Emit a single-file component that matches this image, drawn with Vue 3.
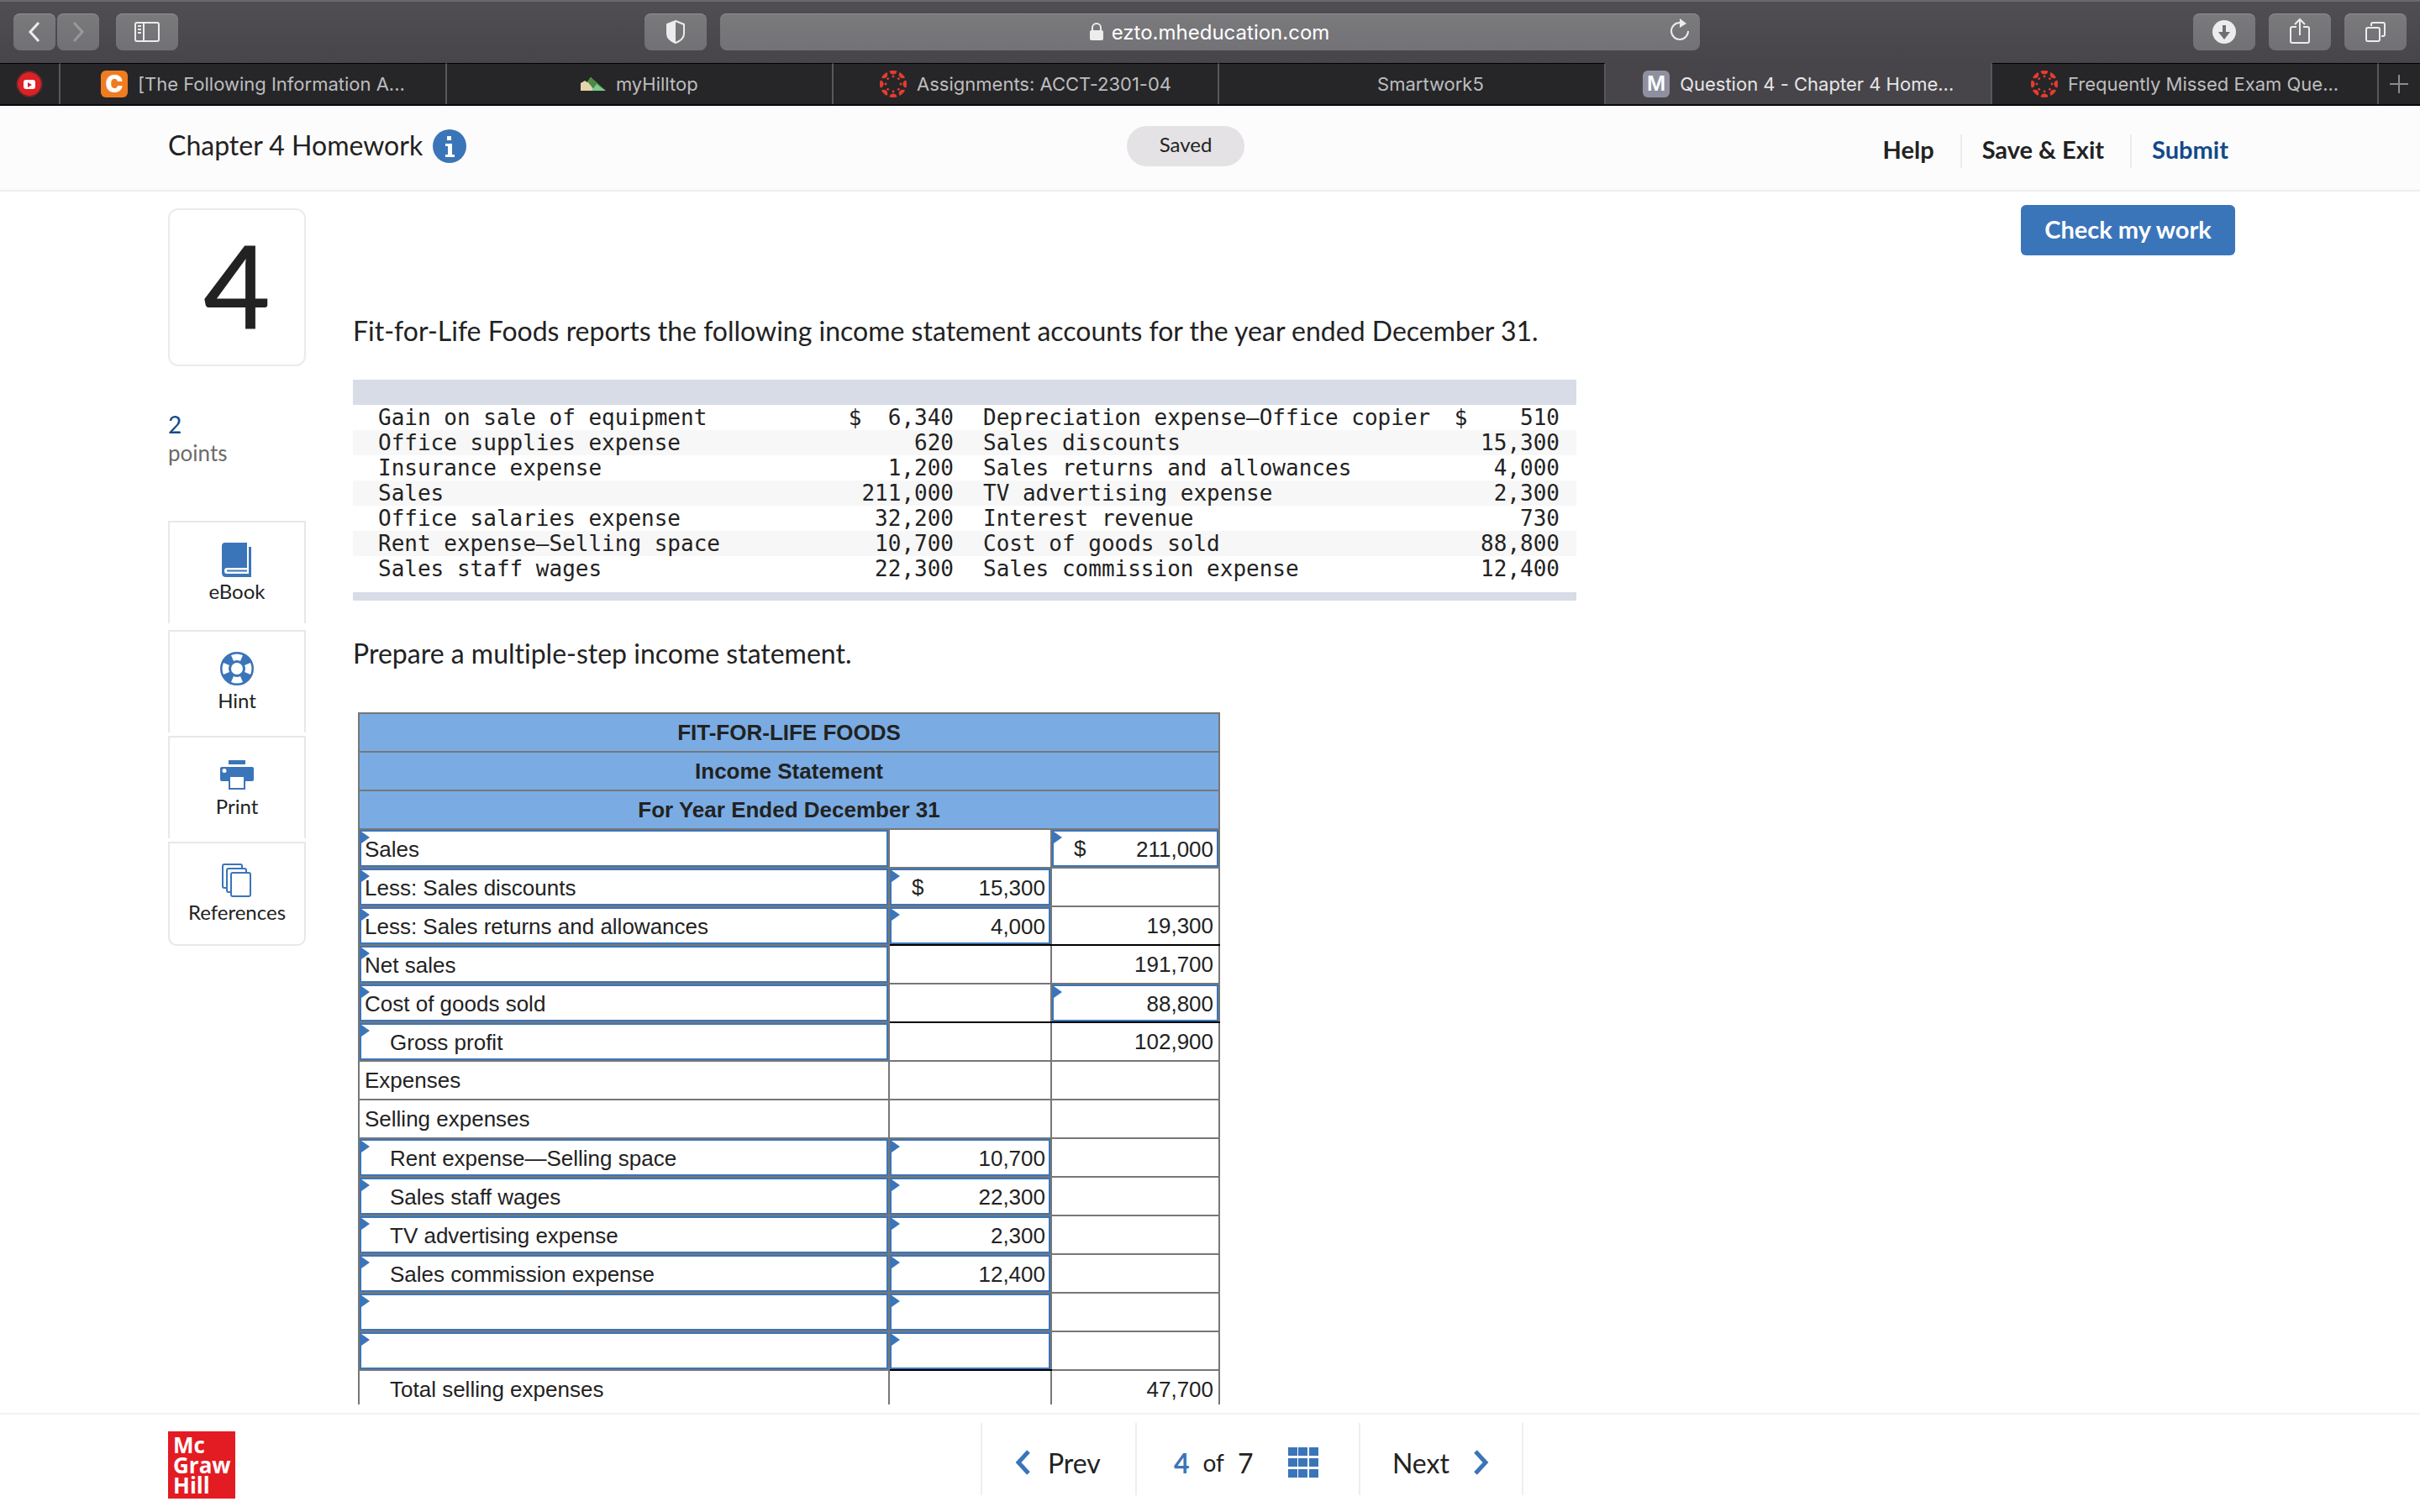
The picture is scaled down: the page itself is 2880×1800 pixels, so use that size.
<script setup>
const tabs = [
  { title: '[The Following Information A...', icon: 'chegg' },
  { title: 'myHilltop', icon: 'hill' },
  { title: 'Assignments: ACCT-2301-04', icon: 'canvas' },
  { title: 'Smartwork5', icon: 'blank' },
  { title: 'Question 4 - Chapter 4 Home...', icon: 'letter', active: true },
  { title: 'Frequently Missed Exam Que...', icon: 'canvas' },
]

const spokes = Array.from({ length: 8 }, (_, i) => {
  const a = (i * Math.PI) / 4
  return {
    x: 16 + 16 * Math.cos(a),
    y: 16 + 16 * Math.sin(a),
    dx: 16 + 9 * Math.cos(a),
    dy: 16 + 9 * Math.sin(a),
  }
})

const accounts = [
  ['Gain on sale of equipment', '$  6,340', 'Depreciation expense—Office copier', '$    510'],
  ['Office supplies expense', '620', 'Sales discounts', '15,300'],
  ['Insurance expense', '1,200', 'Sales returns and allowances', '4,000'],
  ['Sales', '211,000', 'TV advertising expense', '2,300'],
  ['Office salaries expense', '32,200', 'Interest revenue', '730'],
  ['Rent expense—Selling space', '10,700', 'Cost of goods sold', '88,800'],
  ['Sales staff wages', '22,300', 'Sales commission expense', '12,400'],
]

const headings = ['FIT-FOR-LIFE FOODS', 'Income Statement', 'For Year Ended December 31']

// entry: the cell is filled in by the student; rule: a black subtotal line below it
const entry = (text = '', extra = {}) => ({ text, entry: true, ...extra })
const plain = (text = '', extra = {}) => ({ text, ...extra })
const rule = { rule: true }
const indent = { indent: true }
const rows = [
  [entry('Sales'), plain(), entry('211,000', { dollar: true })],
  [entry('Less: Sales discounts'), entry('15,300', { dollar: true }), plain()],
  [entry('Less: Sales returns and allowances'), entry('4,000', rule), plain('19,300', rule)],
  [entry('Net sales'), plain(), plain('191,700')],
  [entry('Cost of goods sold'), plain('', rule), entry('88,800', rule)],
  [entry('Gross profit', indent), plain(), plain('102,900')],
  [plain('Expenses'), plain(), plain()],
  [plain('Selling expenses'), plain(), plain()],
  [entry('Rent expense—Selling space', indent), entry('10,700'), plain()],
  [entry('Sales staff wages', indent), entry('22,300'), plain()],
  [entry('TV advertising expense', indent), entry('2,300'), plain()],
  [entry('Sales commission expense', indent), entry('12,400'), plain()],
  [entry('', indent), entry(), plain()],
  [entry('', indent), entry('', rule), plain()],
  [plain('Total selling expenses', indent), plain(), plain('47,700')],
]
const columns = ['Account', 'Amount', 'Total']
</script>

<template>
  <div class="page">
    <div class="toolbar">
      <div class="group left">
        <div class="pair">
          <button class="tool narrow" aria-label="Back">
            <svg width="50" height="44" viewBox="0 0 50 44"><path d="M30 11 20 22 30 33" class="line bold" /></svg>
          </button>
          <button class="tool narrow dim" aria-label="Forward">
            <svg width="50" height="44" viewBox="0 0 50 44"><path d="M20 11 30 22 20 33" class="line bold" /></svg>
          </button>
        </div>
        <button class="tool" aria-label="Show sidebar">
          <svg width="74" height="44" viewBox="0 0 74 44">
            <rect x="23" y="11" width="28" height="22" rx="2" class="line" />
            <path d="M33 11V33M26 15h4M26 19h4M26 23h4" class="line" />
          </svg>
        </button>
      </div>
      <div class="group middle">
        <button class="tool" aria-label="Privacy report">
          <svg width="74" height="44" viewBox="0 0 74 44">
            <path d="M37 9 47 13V24Q47 31 37 35Q27 31 27 24V13Z" class="line" />
            <path d="M37 9 27 13V24Q27 31 37 35Z" class="solid" />
          </svg>
        </button>
        <div class="address">
          <span class="site">
            <svg width="16" height="22" viewBox="0 0 16 22">
              <rect x="0" y="9" width="16" height="12" rx="2" class="solid" />
              <path d="M3 10V6a5 5 0 0 1 10 0V10" class="line" />
            </svg>
            ezto.mheducation.com
          </span>
          <button class="reload" aria-label="Reload">
            <svg width="24" height="28" viewBox="0 0 24 28">
              <path d="M22 15A10 10 0 1 1 12 5" class="line" />
              <path d="M12 0 20 6 12 11Z" class="solid" />
            </svg>
          </button>
        </div>
      </div>
      <div class="group right">
        <button class="tool" aria-label="Downloads">
          <svg width="74" height="44" viewBox="0 0 74 44">
            <circle cx="37" cy="22" r="14" class="solid" />
            <path d="M37 14V25" stroke="#6f6e72" stroke-width="4" />
            <path d="M30 22H44L37 31Z" fill="#6f6e72" />
          </svg>
        </button>
        <button class="tool" aria-label="Share">
          <svg width="74" height="44" viewBox="0 0 74 44">
            <path d="M33 16H28a2 2 0 0 0-2 2V33a2 2 0 0 0 2 2H46a2 2 0 0 0 2-2V18a2 2 0 0 0-2-2H41M37 26V8M31 13 37 7 43 13" class="line" />
          </svg>
        </button>
        <button class="tool" aria-label="Tab overview">
          <svg width="74" height="44" viewBox="0 0 74 44">
            <rect x="26" y="17" width="16" height="16" rx="2" class="line" />
            <path d="M32 15V13a2 2 0 0 1 2-2H46a2 2 0 0 1 2 2V25a2 2 0 0 1-2 2H44" class="line" />
          </svg>
        </button>
      </div>
    </div>

    <div class="tabs">
      <button class="tab pinned" aria-label="YouTube">
        <svg width="32" height="32" viewBox="0 0 32 32">
          <circle cx="16" cy="16" r="15" fill="#1b1b1d" stroke="#8c3034" stroke-width="1" />
          <circle cx="16" cy="16" r="14" fill="#dc2127" />
          <rect x="9" y="11" width="14" height="11" rx="3" fill="#fff" />
          <path d="M14 14 19 17 14 20Z" fill="#dc2127" />
        </svg>
      </button>
      <button v-for="(tab, i) in tabs" :key="i" class="tab" :class="{ active: tab.active }">
        <span v-if="tab.icon === 'chegg'" class="favicon chegg">C</span>
        <span v-else-if="tab.icon === 'letter'" class="favicon letter">M</span>
        <span v-else-if="tab.icon === 'blank'" class="favicon"></span>
        <svg v-else-if="tab.icon === 'hill'" width="30" height="32" viewBox="0 0 30 32">
          <path d="M0 24V15L5 12 8 14 12 8 18 14V24Z" fill="#e3d6ac" />
          <path d="M8 13 12 8 18 13 30 24H16L13 19Z" fill="#4a8a45" />
          <path d="M19 16 24 20 30 24H13Z" fill="#7ecb8b" />
        </svg>
        <svg v-else width="32" height="32" viewBox="0 0 32 32">
          <clipPath :id="'ring' + i"><circle cx="16" cy="16" r="16" /></clipPath>
          <g fill="#e63c2f" :clip-path="`url(#ring${i})`">
            <template v-for="(s, n) in spokes" :key="n">
              <circle :cx="s.x" :cy="s.y" r="4.6" />
              <circle :cx="s.dx" :cy="s.dy" r="1.4" />
            </template>
          </g>
        </svg>
        <span>{{ tab.title }}</span>
      </button>
      <button class="tab plus" aria-label="New tab">
        <svg width="24" height="24" viewBox="0 0 24 24"><path d="M12 1V23M1 12H23" stroke="#8b8b8d" stroke-width="2" /></svg>
      </button>
    </div>

    <header class="header">
      <div class="title">
        <h1>Chapter 4 Homework</h1>
        <button class="info" aria-label="Assignment information">
          <svg width="40" height="40" viewBox="0 0 40 40">
            <circle cx="20" cy="20" r="20" fill="#3b75b9" />
            <path d="M17 8h5v5h-5zM15 17h8v13h3v3H15v-3h3V20h-3z" fill="#fff" />
          </svg>
        </button>
      </div>
      <div class="saved">Saved</div>
      <nav class="actions">
        <a href="#">Help</a>
        <a href="#">Save &amp; Exit</a>
        <a href="#" class="submit">Submit</a>
      </nav>
    </header>

    <main class="main">
      <aside class="side">
        <div class="number">4</div>
        <div class="points"><b>2</b><span>points</span></div>
        <div class="resources">
          <button class="resource">
            <svg width="40" height="42" viewBox="0 0 40 42">
              <path d="M6 0H32V30H8Q5 30 5 33.500T8 37H34V5H37V41H7Q2 41 2 36V4Q2 0 6 0Z" fill="#3b75b9" />
              <path d="M8 33.500H32" stroke="#3b75b9" stroke-width="2" />
            </svg>
            eBook
          </button>
          <button class="resource">
            <svg width="40" height="42" viewBox="0 0 40 42">
              <circle cx="20" cy="20" r="13" fill="none" stroke="#3b75b9" stroke-width="12" />
              <g fill="#fff">
                <path id="slot" d="M13 4Q20 1 27 4L24 11Q20 9 16 11Z" />
                <use href="#slot" transform="rotate(90 20 20)" />
                <use href="#slot" transform="rotate(180 20 20)" />
                <use href="#slot" transform="rotate(270 20 20)" />
              </g>
              <circle cx="20" cy="20" r="19" fill="none" stroke="#3b75b9" stroke-width="2" />
            </svg>
            Hint
          </button>
          <button class="resource">
            <svg width="40" height="42" viewBox="0 0 40 42">
              <path d="M10 3H30V8H10ZM2 11H38Q40 11 40 13V26Q40 28 38 28H30V38H10V28H2Q0 28 0 26V13Q0 11 2 11Z" fill="#3b75b9" />
              <circle cx="5" cy="15.500" r="2.500" fill="#fff" />
              <path d="M12 23H28V36H12Z" fill="#fff" />
            </svg>
            Print
          </button>
          <button class="resource">
            <svg width="40" height="42" viewBox="0 0 40 42">
              <g fill="#fff" stroke="#3b75b9" stroke-width="2">
                <rect x="3" y="1" width="23" height="28" rx="2" />
                <rect x="8" y="6" width="23" height="28" rx="2" />
                <rect x="13" y="11" width="23" height="28" rx="2" />
              </g>
            </svg>
            References
          </button>
        </div>
      </aside>

      <article class="question">
        <p>Fit-for-Life Foods reports the following income statement accounts for the year ended December 31.</p>
        <div class="accounts">
          <table>
            <colgroup><col class="a1" /><col class="a2" /><col class="a3" /><col class="a4" /></colgroup>
            <tbody>
              <tr v-for="row in accounts" :key="row[0]">
                <td v-for="(cell, c) in row" :key="c">{{ cell }}</td>
              </tr>
            </tbody>
          </table>
        </div>
        <p class="task">Prepare a multiple-step income statement.</p>
        <table class="statement">
          <colgroup><col class="s1" /><col class="s2" /><col class="s3" /></colgroup>
          <thead>
            <tr v-for="h in headings" :key="h"><th colspan="3">{{ h }}</th></tr>
          </thead>
          <tbody>
            <tr v-for="(row, r) in rows" :key="r">
              <td v-for="(cell, c) in row" :key="c" :class="{ rule: cell.rule, amount: c > 0, indent: cell.indent }">
                <label v-if="cell.entry" class="field">
                  <span v-if="cell.dollar" class="dollar">$</span>
                  <input type="text" :value="cell.text" :aria-label="`${columns[c]}, row ${r + 1}`" />
                </label>
                <div v-else class="fixed">{{ cell.text }}</div>
              </td>
            </tr>
          </tbody>
        </table>
      </article>

      <button class="check">Check my work</button>
    </main>

    <footer class="footer">
      <div class="logo">Mc<br />Graw<br />Hill</div>
      <nav class="pager">
        <a href="#" class="prev">
          <svg width="20" height="30" viewBox="0 0 20 30"><path d="M17 2 5 15 17 28" class="chevron" /></svg>
          Prev
        </a>
        <div class="place">
          <b>4</b><span class="of">of</span><span>7</span>
          <button class="grid" aria-label="All questions">
            <svg width="36" height="36" viewBox="0 0 36 36">
              <path d="M0 0h11v10H0zM12 0h11v10H12zM25 0h11v10H25zM0 13h11v10H0zM12 13h11v10H12zM25 13h11v10H25zM0 26h11v10H0zM12 26h11v10H12zM25 26h11v10H25z" fill="#3b75b9" />
            </svg>
          </button>
        </div>
        <a href="#" class="next">
          Next
          <svg width="20" height="30" viewBox="0 0 20 30"><path d="M3 2 15 15 3 28" class="chevron" /></svg>
        </a>
      </nav>
    </footer>
  </div>
</template>

<style>
body {
  margin: 0;
  background: #fff;
}
</style>

<style scoped>
.page {
  display: flex;
  flex-direction: column;
  height: 100vh;
  overflow: hidden;
  color: #222;
  font-family: Lato, "Open Sans", sans-serif;
  font-size: 32px;
  font-variant-ligatures: none;
}
button,
input {
  margin: 0;
  padding: 0;
  border: 0;
  background: none;
  color: inherit;
  font: inherit;
}
a {
  color: inherit;
  text-decoration: none;
}
svg {
  display: block;
  flex: none;
}

/* browser toolbar */
.toolbar {
  display: grid;
  grid-template-columns: 751fr auto 842fr;
  box-sizing: border-box;
  height: 75px;
  padding: 14px 16px 0;
  border-top: 2px solid #6b696d;
  background: linear-gradient(#504e52, #474549);
}
.group {
  display: flex;
  align-items: flex-start;
  gap: 16px;
}
.left {
  gap: 20px;
}
.right {
  justify-content: flex-end;
}
.pair {
  display: flex;
  gap: 2px;
}
.tool {
  box-sizing: border-box;
  width: 74px;
  height: 44px;
  border-radius: 8px;
  background: linear-gradient(#7a797c, #717074);
  box-shadow: inset 0 1px #8f8e91;
}
.narrow {
  width: 50px;
}
.dim svg {
  opacity: 0.3;
}
.line {
  fill: none;
  stroke: #ececec;
  stroke-width: 2;
}
.bold {
  stroke-width: 3;
}
.solid {
  fill: #ececec;
}
.address {
  position: relative;
  display: flex;
  align-items: center;
  justify-content: center;
  width: 1166px;
  height: 44px;
  border-radius: 8px;
  background: linear-gradient(#7a797c, #737276);
  box-shadow: inset 0 1px #8f8e91;
  color: #fff;
  font-family: Inter, sans-serif;
  font-size: 24px;
}
.site {
  display: flex;
  align-items: center;
  gap: 10px;
}
.reload {
  position: absolute;
  top: 6px;
  right: 12px;
}

/* tab strip */
.tabs {
  display: flex;
  height: 51px;
  box-sizing: border-box;
  border-bottom: 2px solid #0a0a0a;
  background: #262628;
  color: #bdbdbf;
  font-family: Inter, sans-serif;
  font-size: 22px;
}
.tab {
  display: flex;
  flex: 1 1 0;
  align-items: center;
  justify-content: center;
  gap: 12px;
  box-sizing: border-box;
  border-top: 1px solid #000;
  border-right: 2px solid #58575a;
  white-space: nowrap;
}
.tab.active {
  border-top-color: #474549;
  background: #474549;
  color: #e6e6e7;
}
.tab.pinned {
  flex: 0 0 72px;
}
.tab.plus {
  flex: 0 0 49px;
  border-right: 0;
}
.favicon {
  width: 32px;
  height: 32px;
  border-radius: 6px;
  color: #fff;
  line-height: 32px;
  text-align: center;
}
.chegg {
  background: #f07c22;
  font-size: 28px;
  font-weight: 900;
}
.letter {
  background: #8f909f;
  font-size: 24px;
  font-weight: 600;
}

/* assignment header */
.header {
  display: grid;
  grid-template-columns: 1141fr 140px 1179fr;
  flex: none;
  box-sizing: border-box;
  height: 102px;
  padding: 24px 220px 0 200px;
  border-bottom: 2px solid #eee;
  background: #fcfcfc;
}
.title {
  display: flex;
  align-items: flex-start;
  gap: 12px;
}
h1 {
  margin: 0;
  font-size: 32px;
  font-weight: 400;
  line-height: 46px;
}
.info {
  margin-top: 4px;
}
.saved {
  height: 48px;
  border-radius: 24px;
  background: #e4e2e5;
  font-size: 24px;
  line-height: 44px;
  text-align: center;
}
.actions {
  display: flex;
  align-items: flex-start;
  justify-content: flex-end;
  padding: 10px 8px 0 0;
  font-size: 29px;
  font-weight: 700;
  line-height: 36px;
}
.actions a {
  padding-bottom: 4px;
}
.actions a + a {
  margin-left: 31px;
  padding-left: 24px;
  border-left: 2px solid #ececec;
}
.submit {
  color: #114a8a;
}

/* question area */
.main {
  display: flex;
  flex: 1 1 0;
  align-items: flex-start;
  min-height: 0;
  margin-bottom: 10px;
  padding: 0 220px 0 200px;
  overflow: hidden;
}
.side {
  flex: none;
  width: 164px;
  padding-top: 20px;
}
.number {
  box-sizing: border-box;
  height: 188px;
  border: 2px solid #ebebeb;
  border-radius: 12px;
  font-size: 138px;
  font-weight: 500;
  line-height: 176px;
  text-align: center;
}
.points {
  display: flex;
  flex-direction: column;
  margin-top: 52px;
  color: #6b6b6b;
  font-size: 26px;
  line-height: 34px;
}
.points b {
  color: #114a8a;
  font-size: 28px;
  font-weight: 400;
}
.resources {
  display: flex;
  flex-direction: column;
  gap: 4px;
  margin-top: 64px;
}
.resource {
  display: flex;
  flex-direction: column;
  align-items: center;
  box-sizing: border-box;
  height: 122px;
  padding-top: 24px;
  border: 2px solid #e8e8e8;
  border-bottom: 0;
  font-size: 24px;
  line-height: 32px;
}
.resource:first-child {
  margin-bottom: 4px;
}
.resource:last-child {
  height: 124px;
  border-bottom: 2px solid #e8e8e8;
  border-radius: 0 0 10px 10px;
}
.question {
  flex: 1;
  min-width: 0;
  padding: 146px 0 0 56px;
}
p {
  margin: 0;
  line-height: 40px;
}
.accounts {
  width: 1456px;
  margin-top: 38px;
  padding-bottom: 13px;
  border-top: 30px solid #d8dce7;
  border-bottom: 10px solid #d8dce7;
}
table {
  border-collapse: collapse;
  table-layout: fixed;
}
.accounts table {
  width: 100%;
  font-family: "DejaVu Sans Mono", monospace;
  font-size: 26px;
  line-height: 30px;
  white-space: pre;
}
.accounts td {
  padding: 0;
}
.accounts tr:nth-child(even) {
  background: #f7f7f7;
}
.accounts td:nth-child(even) {
  text-align: right;
}
.accounts td:nth-child(1) {
  padding-left: 30px;
}
.accounts td:nth-child(3) {
  padding-left: 35px;
}
.accounts td:nth-child(4) {
  padding-right: 20px;
}
.a1 {
  width: 560px;
}
.a2 {
  width: 155px;
}
.a3 {
  width: 569px;
}
.a4 {
  width: 172px;
}
.task {
  margin-top: 43px;
}
.statement {
  width: 1025px;
  margin: 50px 0 0 6px;
  font-family: "Liberation Sans", Arial, sans-serif;
  font-size: 26px;
}
.s1 {
  width: 631px;
}
.s2 {
  width: 193px;
}
.s3 {
  width: 200px;
}
.statement th,
.statement td {
  height: 44px;
  padding: 0;
  border: 2px solid #777;
}
.statement th {
  background: #7aace3;
  font-weight: 700;
}
.statement td {
  position: relative;
}
.statement td.rule {
  border-bottom-color: #000;
}
.field,
.fixed {
  display: flex;
  align-items: center;
  box-sizing: border-box;
  height: 44px;
}
.field {
  border: 2px solid #3b75b9;
}
.field::before {
  position: absolute;
  top: 2px;
  left: 2px;
  border-top: 7px solid transparent;
  border-bottom: 7px solid transparent;
  border-left: 10px solid #3b75b9;
  content: "";
}
.field input {
  flex: 1;
  box-sizing: border-box;
  width: 0;
  height: 40px;
  padding: 2px 4px 0;
}
.fixed {
  padding: 0 6px;
}
.amount .fixed {
  justify-content: flex-end;
}
.amount input {
  text-align: right;
}
.indent input {
  padding-left: 34px;
}
.indent .fixed {
  padding-left: 36px;
}
.dollar {
  padding-left: 24px;
}
.check {
  flex: none;
  box-sizing: border-box;
  width: 255px;
  height: 60px;
  margin-top: 16px;
  padding-bottom: 4px;
  border-radius: 6px;
  background: #3b75b9;
  color: #fff;
  font-size: 29px;
  font-weight: 700;
}

/* footer */
.footer {
  display: grid;
  grid-template-columns: 968fr auto 848fr;
  flex: none;
  box-sizing: border-box;
  height: 118px;
  padding: 0 220px 0 200px;
  border-top: 2px solid #f2f2f2;
}
.logo {
  box-sizing: border-box;
  width: 80px;
  height: 80px;
  margin-top: 20px;
  padding: 4px 6px;
  background: #e31b23;
  color: #fff;
  font-family: "Open Sans", sans-serif;
  font-size: 26px;
  font-weight: 700;
  line-height: 24px;
}
.pager {
  display: flex;
  height: 86px;
  margin-top: 10px;
  border-right: 2px solid #eee;
}
.pager > * {
  display: flex;
  align-items: center;
  box-sizing: border-box;
  padding-top: 8px;
  border-left: 2px solid #eee;
}
.prev {
  gap: 20px;
  width: 184px;
  padding-left: 38px;
}
.place {
  gap: 16px;
  width: 266px;
  padding-left: 44px;
}
.place b {
  color: #3b75b9;
  font-weight: 700;
}
.of {
  font-size: 28px;
}
.grid {
  margin-left: 26px;
}
.next {
  gap: 28px;
  width: 194px;
  padding-left: 38px;
}
.chevron {
  fill: none;
  stroke: #3b75b9;
  stroke-width: 5;
}
</style>
